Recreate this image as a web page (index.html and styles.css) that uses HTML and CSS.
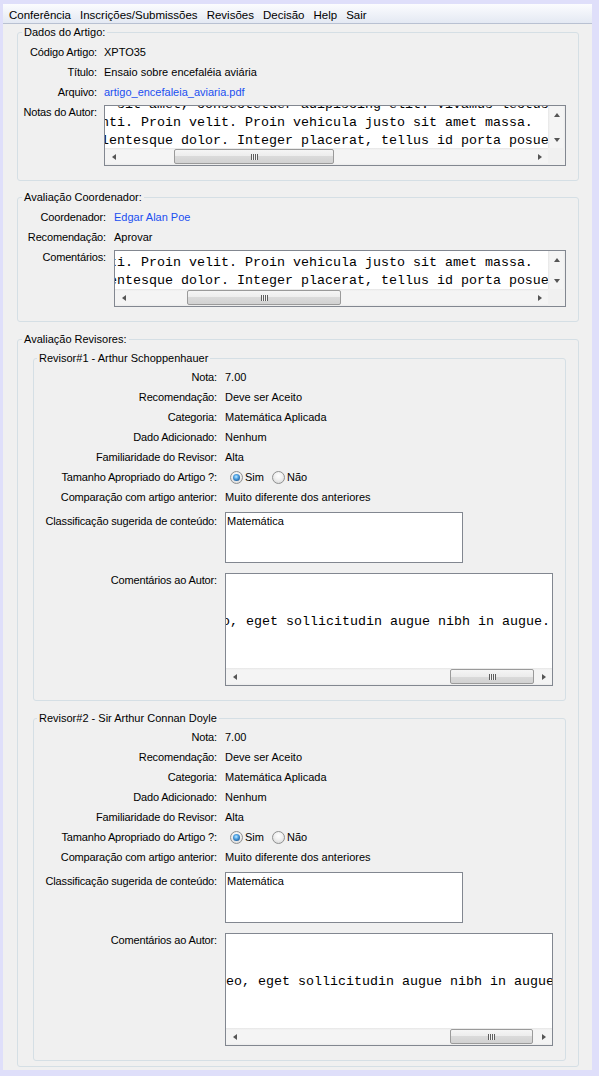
FILE: index.html
```html
<!DOCTYPE html>
<html lang="pt">
<head>
<meta charset="utf-8">
<title>Avaliação do Artigo</title>
<link rel="stylesheet" href="styles.css">
</head>
<body>
<div class="window">
  <nav class="menubar">
    <span class="menu-item">Conferência</span>
    <span class="menu-item">Inscrições/Submissões</span>
    <span class="menu-item">Revisões</span>
    <span class="menu-item">Decisão</span>
    <span class="menu-item">Help</span>
    <span class="menu-item">Sair</span>
  </nav>

  <main class="content">
    <fieldset class="group">
      <legend>Dados do Artigo:</legend>
      <div class="form form-artigo">
        <span class="label">Código Artigo:</span><span class="value">XPTO35</span>
        <span class="label">Título:</span><span class="value">Ensaio sobre encefaléia aviária</span>
        <span class="label">Arquivo:</span><span class="value link">artigo_encefaleia_aviaria.pdf</span>
        <span class="label label-box">Notas do Autor:</span>
        <div class="scrollarea box-notas">
          <div class="sa-main">
            <div class="viewport"><div class="text scroll-notas">Lorem ipsum dolor sit amet, consectetuer adipiscing elit. Vivamus lectus.
Suspendisse potenti. Proin velit. Proin vehicula justo sit amet massa.
Nam at ante. Pellentesque dolor. Integer placerat, tellus id porta posuere, ipsum.
Aenean ut diam. Sed sit amet erat.</div></div>
            <div class="vscroll"><span class="sbtn"><i class="arrow up"></i></span><span class="sbtn"><i class="arrow down"></i></span></div>
          </div>
          <div class="sa-bottom">
            <div class="hscroll">
              <span class="sbtn"><i class="arrow left"></i></span>
              <span class="track"><span class="thumb" style="margin-left:52px;width:160px"><i class="grip"></i></span></span>
              <span class="sbtn"><i class="arrow right"></i></span>
            </div>
            <span class="corner"></span>
          </div>
        </div>
      </div>
    </fieldset>

    <fieldset class="group">
      <legend>Avaliação Coordenador:</legend>
      <div class="form form-coord">
        <span class="label">Coordenador:</span><span class="value link">Edgar Alan Poe</span>
        <span class="label">Recomendação:</span><span class="value">Aprovar</span>
        <span class="label label-box">Comentários:</span>
        <div class="scrollarea box-coord">
          <div class="sa-main">
            <div class="viewport"><div class="text scroll-coord">Suspendisse potenti. Proin velit. Proin vehicula justo sit amet massa.
Nam at ante. Pellentesque dolor. Integer placerat, tellus id porta posuere, ipsum.
Aenean ut diam. Sed sit amet erat.</div></div>
            <div class="vscroll"><span class="sbtn"><i class="arrow up"></i></span><span class="sbtn"><i class="arrow down"></i></span></div>
          </div>
          <div class="sa-bottom">
            <div class="hscroll">
              <span class="sbtn"><i class="arrow left"></i></span>
              <span class="track"><span class="thumb" style="margin-left:55px;width:154px"><i class="grip"></i></span></span>
              <span class="sbtn"><i class="arrow right"></i></span>
            </div>
            <span class="corner"></span>
          </div>
        </div>
      </div>
    </fieldset>

    <fieldset class="group group-revisores">
      <legend>Avaliação Revisores:</legend>

      <fieldset class="group group-revisor">
        <legend>Revisor#1 - Arthur Schoppenhauer</legend>
        <div class="form form-revisor">
          <span class="label">Nota:</span><span class="value">7.00</span>
          <span class="label">Recomendação:</span><span class="value">Deve ser Aceito</span>
          <span class="label">Categoria:</span><span class="value">Matemática Aplicada</span>
          <span class="label">Dado Adicionado:</span><span class="value">Nenhum</span>
          <span class="label">Familiaridade do Revisor:</span><span class="value">Alta</span>
          <span class="label">Tamanho Apropriado do Artigo ?:</span>
          <span class="value radios"><span class="radio checked"></span><span class="radio-text">Sim</span><span class="radio"></span><span class="radio-text">Não</span></span>
          <span class="label">Comparação com artigo anterior:</span><span class="value">Muito diferente dos anteriores</span>
          <span class="label label-classif">Classificação sugerida de conteúdo:</span>
          <div class="textbox classif">Matemática</div>
          <span class="label label-coment">Comentários ao Autor:</span>
          <div class="scrollarea box-autor">
            <div class="sa-main">
              <div class="viewport"><div class="text scroll-autor1">Vivamus vitae leo, eget sollicitudin augue nibh in augue.</div></div>
            </div>
            <div class="sa-bottom">
              <div class="hscroll">
                <span class="sbtn"><i class="arrow left"></i></span>
                <span class="track"><span class="thumb" style="margin-left:207px;width:84px"><i class="grip"></i></span></span>
                <span class="sbtn"><i class="arrow right"></i></span>
              </div>
            </div>
          </div>
        </div>
      </fieldset>

      <fieldset class="group group-revisor">
        <legend>Revisor#2 - Sir Arthur Connan Doyle</legend>
        <div class="form form-revisor">
          <span class="label">Nota:</span><span class="value">7.00</span>
          <span class="label">Recomendação:</span><span class="value">Deve ser Aceito</span>
          <span class="label">Categoria:</span><span class="value">Matemática Aplicada</span>
          <span class="label">Dado Adicionado:</span><span class="value">Nenhum</span>
          <span class="label">Familiaridade do Revisor:</span><span class="value">Alta</span>
          <span class="label">Tamanho Apropriado do Artigo ?:</span>
          <span class="value radios"><span class="radio checked"></span><span class="radio-text">Sim</span><span class="radio"></span><span class="radio-text">Não</span></span>
          <span class="label">Comparação com artigo anterior:</span><span class="value">Muito diferente dos anteriores</span>
          <span class="label label-classif">Classificação sugerida de conteúdo:</span>
          <div class="textbox classif">Matemática</div>
          <span class="label label-coment">Comentários ao Autor:</span>
          <div class="scrollarea box-autor">
            <div class="sa-main">
              <div class="viewport"><div class="text scroll-autor2">Vivamus vitae leo, eget sollicitudin augue nibh in augue.</div></div>
            </div>
            <div class="sa-bottom">
              <div class="hscroll">
                <span class="sbtn"><i class="arrow left"></i></span>
                <span class="track"><span class="thumb" style="margin-left:207px;width:83px"><i class="grip"></i></span></span>
                <span class="sbtn"><i class="arrow right"></i></span>
              </div>
            </div>
          </div>
        </div>
      </fieldset>
    </fieldset>
  </main>
</div>
</body>
</html>
```

FILE: styles.css
```css
* { box-sizing: border-box; }

html, body {
  margin: 0;
  padding: 0;
  background: #dfdffa;
}

body {
  font-family: "Liberation Sans", Arial, sans-serif;
  font-size: 11px;
  color: #000;
}

.window {
  margin: 4px 7px 0 3px;
  background: #f0f0f0;
  padding-bottom: 3px;
}

/* ---------- menu bar ---------- */
.menubar {
  display: flex;
  height: 20px;
  padding-left: 1.5px;
  background: linear-gradient(#fbfcfe, #e4e9f3);
  border-bottom: 1px solid #b9c1d2;
}

.menu-item {
  padding: 4px 4.5px 0;
  line-height: 15px;
  font-size: 11.5px;
  white-space: nowrap;
}

/* ---------- group boxes ---------- */
.content {
  padding: 2px 13px 0 14px;
}

.group {
  margin: 0;
  padding: 3px 12px 14px 0;
  border: 1px solid #d5dfe5;
  border-radius: 3px;
  min-width: 0;
}

.group + .group { margin-top: 10px; }

.group > legend {
  margin-left: 4px;
  padding: 0 2px;
  line-height: 13px;
  white-space: nowrap;
}

.group-revisores { padding: 6px 12px 5px 15px; }
.group.group-revisores { margin-top: 11px; }
.group-revisores > legend { margin-left: -11px; }

.group-revisor { padding: 2px 12px 14px 4px; }
.group.group-revisor + .group-revisor { margin-top: 11px; }
.group-revisor > legend { margin-left: -1px; }

/* ---------- forms ---------- */
.form {
  display: grid;
  align-items: start;
}

.form-artigo { grid-template-columns: 79px minmax(0, 1fr); column-gap: 7px; }
.form-coord { grid-template-columns: 88px minmax(0, 1fr); column-gap: 8px; }
.form-revisor { grid-template-columns: 179px minmax(0, 1fr); column-gap: 8px; }

.label, .value {
  line-height: 20px;
  white-space: nowrap;
  min-width: 0;
}

.label { text-align: right; letter-spacing: -0.15px; }

.label-box { line-height: 14px; margin-top: 3px; }
.label-classif { line-height: 14px; margin-top: 7px; }
.label-coment { line-height: 14px; margin-top: 10px; }

.link { color: #1b4ff0; }

/* ---------- radios ---------- */
.radios { display: flex; align-items: center; height: 20px; }

.radio {
  position: relative;
  flex: none;
  width: 13px;
  height: 13px;
  margin-left: 8px;
  border-radius: 50%;
  border: 1px solid #8f9090;
  background: radial-gradient(circle at 50% 35%, #ffffff 0, #f2f2f2 40%, #d3d3d3 100%);
}

.radio:first-child { margin-left: 5px; }

.radio.checked::after {
  content: "";
  position: absolute;
  left: 2px;
  top: 2px;
  width: 7px;
  height: 7px;
  border-radius: 50%;
  background: radial-gradient(circle at 45% 40%, #c6ecff 0, #55a8e8 35%, #1f5f9e 75%, #1b4e82 100%);
}

.radio-text { margin-left: 2px; }

/* ---------- text boxes ---------- */
.textbox {
  border: 1px solid #828790;
  background: #fff;
  padding: 0 1px;
  line-height: 17px;
}

.classif { width: 238px; height: 51px; margin-top: 5px; }

.scrollarea {
  display: flex;
  flex-direction: column;
  min-width: 0;
  border: 1px solid #828790;
  background: #fff;
  margin-top: 3px;
}

.box-notas { height: 61px; }
.box-coord { height: 57px; }
.box-autor { height: 113px; margin-top: 10px; }

.sa-main { flex: 1; display: flex; min-height: 0; min-width: 0; }

.viewport {
  flex: 1;
  min-width: 0;
  overflow: hidden;
  font-family: "Liberation Mono", "Courier New", monospace;
  font-size: 13.333px;
  line-height: 18px;
}

.text { white-space: pre; }

/* emulated scroll offsets of each text area */
.scroll-notas { margin: -10px 0 0 -132px; }
.scroll-coord { margin: 3px 0 0 -142px; }
.scroll-autor1 { margin: 39px 0 0 -132px; }
.scroll-autor2 { margin: 39px 0 0 -120px; }

/* ---------- scrollbars ---------- */
.vscroll {
  width: 17px;
  flex: none;
  display: flex;
  flex-direction: column;
  justify-content: space-between;
  background: linear-gradient(to right, #e6e6e6, #f4f4f4 2px, #f4f4f4 15px, #ebebeb);
}

.vscroll .sbtn { height: 17px; }

.sa-bottom { display: flex; height: 17px; flex: none; min-width: 0; }

.hscroll {
  flex: 1;
  min-width: 0;
  display: flex;
  background: linear-gradient(#e6e6e6, #f4f4f4 2px, #f4f4f4 15px, #ebebeb);
}

.corner { width: 17px; flex: none; background: #f0f0f0; }

.sbtn {
  flex: none;
  width: 17px;
  display: flex;
  align-items: center;
  justify-content: center;
}

.arrow {
  display: block;
  width: 0;
  height: 0;
  border-style: solid;
  border-color: transparent;
}

.arrow.left { border-width: 3.5px 4px 3.5px 0; border-right-color: #555; }
.arrow.right { border-width: 3.5px 0 3.5px 4px; border-left-color: #555; }
.arrow.up { border-width: 0 3.5px 4px 3.5px; border-bottom-color: #555; }
.arrow.down { border-width: 4px 3.5px 0 3.5px; border-top-color: #555; }

.track { flex: 1; min-width: 0; display: flex; align-items: center; }

.thumb {
  flex: none;
  height: 15px;
  border: 1px solid #9a9a9a;
  border-radius: 2px;
  background: linear-gradient(#f5f5f5, #ececec 50%, #dadada 50%, #d2d2d2);
  display: flex;
  align-items: center;
  justify-content: center;
}

.grip {
  display: block;
  width: 7px;
  height: 6px;
  background: repeating-linear-gradient(to right, #5e5e5e 0 1px, #f4f4f4 1px 2px);
}
```
